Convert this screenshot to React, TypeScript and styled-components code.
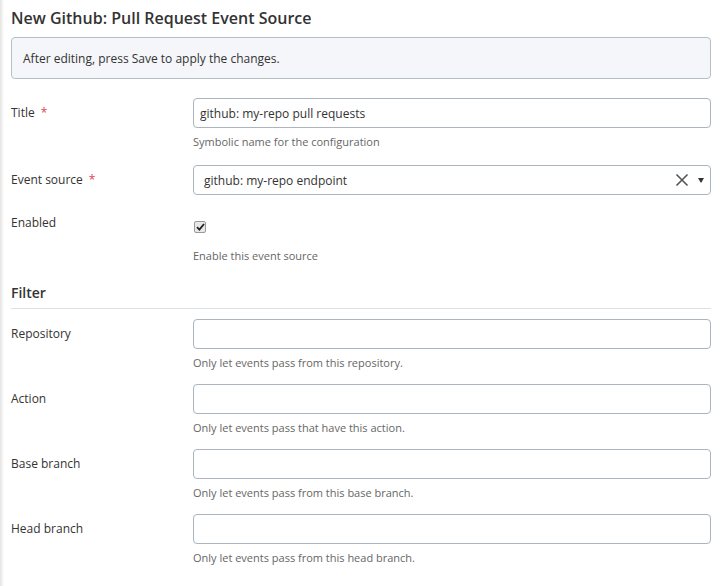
import styled, { createGlobalStyle } from "styled-components";

const GlobalStyle = createGlobalStyle`
  html, body {
    margin: 0;
    padding: 0;
    background: #ffffff;
  }
  body {
    font-family: "Open Sans", "Noto Sans", sans-serif;
    color: #333;
  }
`;

const Page = styled.div`
  display: flex;
  min-height: 586px;
`;

const Edge = styled.div`
  width: 4px;
  flex-shrink: 0;
  background: linear-gradient(90deg, #e4e4e4 0%, #f3f3f3 60%, #ffffff 100%);
`;

const Content = styled.div`
  flex: 1;
  padding: 0 16px 0 7px;
`;

const Heading = styled.h2`
  margin: 0;
  padding-top: 7px;
  font-size: 16px;
  font-weight: 600;
  line-height: 22px;
  color: #333;
`;

const Notice = styled.div`
  margin-top: 8px;
  height: 42px;
  box-sizing: border-box;
  display: flex;
  align-items: center;
  padding: 0 11px;
  background: #f4f6f9;
  border: 1px solid #b4c0c9;
  border-radius: 4px;
  font-size: 12px;
  color: #333;
`;

const Form = styled.div`
  margin-top: 19px;
  display: flex;
  flex-direction: column;
`;

const Row = styled.div<{ $gap?: number }>`
  display: grid;
  grid-template-columns: 182px 1fr;
  margin-bottom: ${(p) => p.$gap ?? 15}px;
`;

const Label = styled.div`
  font-size: 12px;
  line-height: 30px;
  color: #333;
`;

const Req = styled.span`
  color: #e0454d;
  margin-left: 6px;
`;

const Field = styled.div`
  display: flex;
  flex-direction: column;
`;

const Input = styled.input`
  height: 30px;
  box-sizing: border-box;
  border: 1px solid #aab5bf;
  border-radius: 4px;
  padding: 0 6px;
  font-family: inherit;
  font-size: 12px;
  color: #333;
  outline: none;
`;

const Select = styled.div`
  height: 30px;
  box-sizing: border-box;
  border: 1px solid #aab5bf;
  border-radius: 4px;
  display: flex;
  align-items: center;
  padding: 0 6px 0 10px;
  font-size: 12px;
  color: #333;
`;

const SelectValue = styled.span`
  flex: 1;
`;

const Clear = styled.span`
  display: flex;
  align-items: center;
  margin-right: 9px;
`;

const Caret = styled.span`
  width: 0;
  height: 0;
  border-left: 3px solid transparent;
  border-right: 3px solid transparent;
  border-top: 5px solid #333;
`;

const Help = styled.div<{ $top?: number }>`
  margin-top: ${(p) => p.$top ?? 6}px;
  font-size: 11px;
  line-height: 16px;
  color: #666;
`;

const CheckWrap = styled.div`
  height: 38px;
  display: flex;
  align-items: center;
  padding-left: 1px;
`;

const CheckBox = styled.span`
  width: 10px;
  height: 10px;
  border: 1px solid #9a9a9a;
  border-radius: 2px;
  background: #e8e8e8;
  display: flex;
  align-items: center;
  justify-content: center;
`;

const SectionTitle = styled.h3`
  margin: 19px 0 0;
  padding-bottom: 5px;
  font-size: 14px;
  font-weight: 600;
  line-height: 20px;
  border-bottom: 1px solid #dde1e5;
  color: #333;
`;

const FilterForm = styled.div`
  margin-top: 10px;
  display: flex;
  flex-direction: column;
`;

const filters = [
  { label: "Repository", help: "Only let events pass from this repository." },
  { label: "Action", help: "Only let events pass that have this action." },
  { label: "Base branch", help: "Only let events pass from this base branch." },
  { label: "Head branch", help: "Only let events pass from this head branch." },
];

const App = (): JSX.Element => {
  return (
    <Page>
      <GlobalStyle />
      <Edge />
      <Content>
        <Heading>New Github: Pull Request Event Source</Heading>
        <Notice>After editing, press Save to apply the changes.</Notice>

        <Form>
          <Row>
            <Label>
              Title<Req>*</Req>
            </Label>
            <Field>
              <Input defaultValue="github: my-repo pull requests" />
              <Help>Symbolic name for the configuration</Help>
            </Field>
          </Row>
          <Row $gap={13}>
            <Label>
              Event source<Req>*</Req>
            </Label>
            <Field>
              <Select>
                <SelectValue>github: my-repo endpoint</SelectValue>
                <Clear>
                  <svg width="14" height="14" viewBox="0 0 14 14">
                    <path
                      d="M1.5 1.5 L12.5 12.5 M12.5 1.5 L1.5 12.5"
                      stroke="#555"
                      strokeWidth="1.6"
                      fill="none"
                    />
                  </svg>
                </Clear>
                <Caret />
              </Select>
            </Field>
          </Row>
          <Row $gap={0}>
            <Label>Enabled</Label>
            <Field>
              <CheckWrap>
                <CheckBox>
                  <svg width="9" height="8" viewBox="0 0 9 8">
                    <path
                      d="M1 4.2 L3.4 6.6 L8 1"
                      stroke="#222"
                      strokeWidth="1.8"
                      fill="none"
                    />
                  </svg>
                </CheckBox>
              </CheckWrap>
              <Help $top={2}>Enable this event source</Help>
            </Field>
          </Row>
        </Form>

        <SectionTitle>Filter</SectionTitle>

        <FilterForm>
          {filters.map((f) => (
            <Row key={f.label} $gap={13}>
              <Label>{f.label}</Label>
              <Field>
                <Input />
                <Help>{f.help}</Help>
              </Field>
            </Row>
          ))}
        </FilterForm>
      </Content>
    </Page>
  );
};

export default App;
